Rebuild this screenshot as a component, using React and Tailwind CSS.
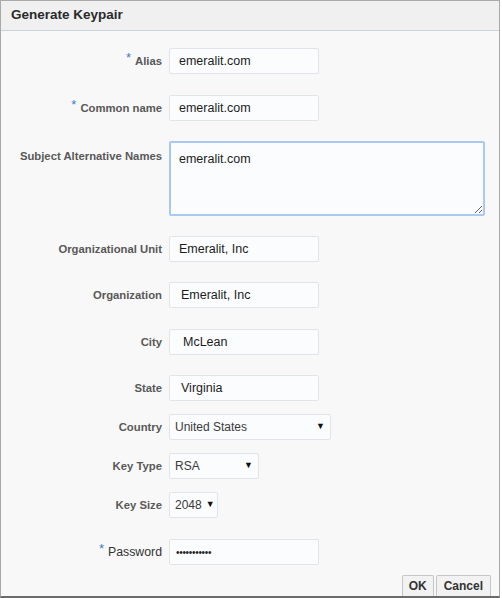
import React from 'react';

const font = { fontFamily: '"Liberation Sans", Arial, sans-serif' };

const Label = ({ children, required, bold = true, top = false }) => (
  <div
    className={`w-[161px] mr-[7px] shrink-0 text-right leading-[14px] ${
      bold ? 'text-[11.3px] font-bold text-[#585858]' : 'text-[12.3px] text-[#333]'
    } ${top ? 'self-start pt-[8px]' : ''}`}
  >
    {required && <span className="text-[#3b7fc4] font-normal text-[13px] mr-[4px] relative top-[-3px]">*</span>}
    {children}
  </div>
);

const TextField = ({ value, pad = 'pl-[9px]' }) => (
  <input
    readOnly
    defaultValue={value}
    className={`w-[150px] h-[26px] ${pad} bg-[#fbfcfe] border border-[#e1e5ea] rounded-[2px] text-[12.5px] text-[#1c1c1c] outline-none`}
    style={font}
  />
);

const SelectBox = ({ value, width }) => (
  <div
    className={`${width} h-[26px] flex items-center justify-between gap-[4px] pl-[5px] pr-[5px] bg-[#fbfcfe] border border-[#e1e5ea] rounded-[2px] text-[12px] text-[#3a3a3a]`}
  >
    <span>{value}</span>
    <span className="text-[9px] text-[#111]">▼</span>
  </div>
);

const Row = ({ mt, children }) => <div className={`flex items-center ${mt}`}>{children}</div>;

export default function App() {
  return (
    <div className="w-[502px] h-[598px] bg-white" style={font}>
      <div className="w-[500px] h-[598px] flex flex-col bg-[#f8f8f8] border border-[#a9a9a9] border-b-2 border-b-[#6b6b6b]">
        <div className="h-[30px] shrink-0 flex items-center px-[10px] bg-[#f0f0f0] border-b border-[#c8d2dd]">
          <h1 className="text-[13.5px] font-bold text-[#2a2a2a]">Generate Keypair</h1>
        </div>

        <div className="flex-1 flex flex-col">
          <Row mt="mt-[17px]">
            <Label required>Alias</Label>
            <TextField value="emeralit.com" />
          </Row>
          <Row mt="mt-[21px]">
            <Label required>Common name</Label>
            <TextField value="emeralit.com" />
          </Row>
          <Row mt="mt-[20px]">
            <Label top>Subject Alternative Names</Label>
            <textarea
              readOnly
              defaultValue="emeralit.com"
              className="w-[316px] h-[75px] px-[8px] pt-[9px] bg-[#fbfcfe] border-2 border-[#a9c9f2] rounded-[2px] text-[12.5px] leading-[14px] text-[#1c1c1c] outline-none"
              style={font}
            />
          </Row>
          <Row mt="mt-[20px]">
            <Label>Organizational Unit</Label>
            <TextField value="Emeralit, Inc" />
          </Row>
          <Row mt="mt-[20px]">
            <Label>Organization</Label>
            <TextField value="Emeralit, Inc" pad="pl-[11px]" />
          </Row>
          <Row mt="mt-[21px]">
            <Label>City</Label>
            <TextField value="McLean" pad="pl-[13px]" />
          </Row>
          <Row mt="mt-[20px]">
            <Label>State</Label>
            <TextField value="Virginia" pad="pl-[11px]" />
          </Row>
          <Row mt="mt-[13px]">
            <Label>Country</Label>
            <SelectBox value="United States" width="w-[162px]" />
          </Row>
          <Row mt="mt-[13px]">
            <Label>Key Type</Label>
            <SelectBox value="RSA" width="w-[90px]" />
          </Row>
          <Row mt="mt-[13px]">
            <Label>Key Size</Label>
            <SelectBox value="2048" width="w-[49px]" />
          </Row>
          <Row mt="mt-[21px]">
            <Label required bold={false}>Password</Label>
            <div className="w-[150px] h-[26px] flex items-center pl-[6px] bg-[#fbfcfe] border border-[#e1e5ea] rounded-[2px] text-[10px] text-[#222] tracking-[-0.3px]">
              •••••••••••
            </div>
          </Row>

          <div className="mt-auto flex justify-end gap-[2px] pr-[8px]">
            <button className="h-[21px] px-[6px] bg-[#f2f2f2] border border-b-0 border-[#c6c6c6] rounded-t-[2px] text-[12px] font-bold text-[#333]">
              OK
            </button>
            <button className="h-[21px] px-[7px] bg-[#f2f2f2] border border-b-0 border-[#c6c6c6] rounded-t-[2px] text-[12px] font-bold text-[#333]">
              Cancel
            </button>
          </div>
        </div>
      </div>
    </div>
  );
}
